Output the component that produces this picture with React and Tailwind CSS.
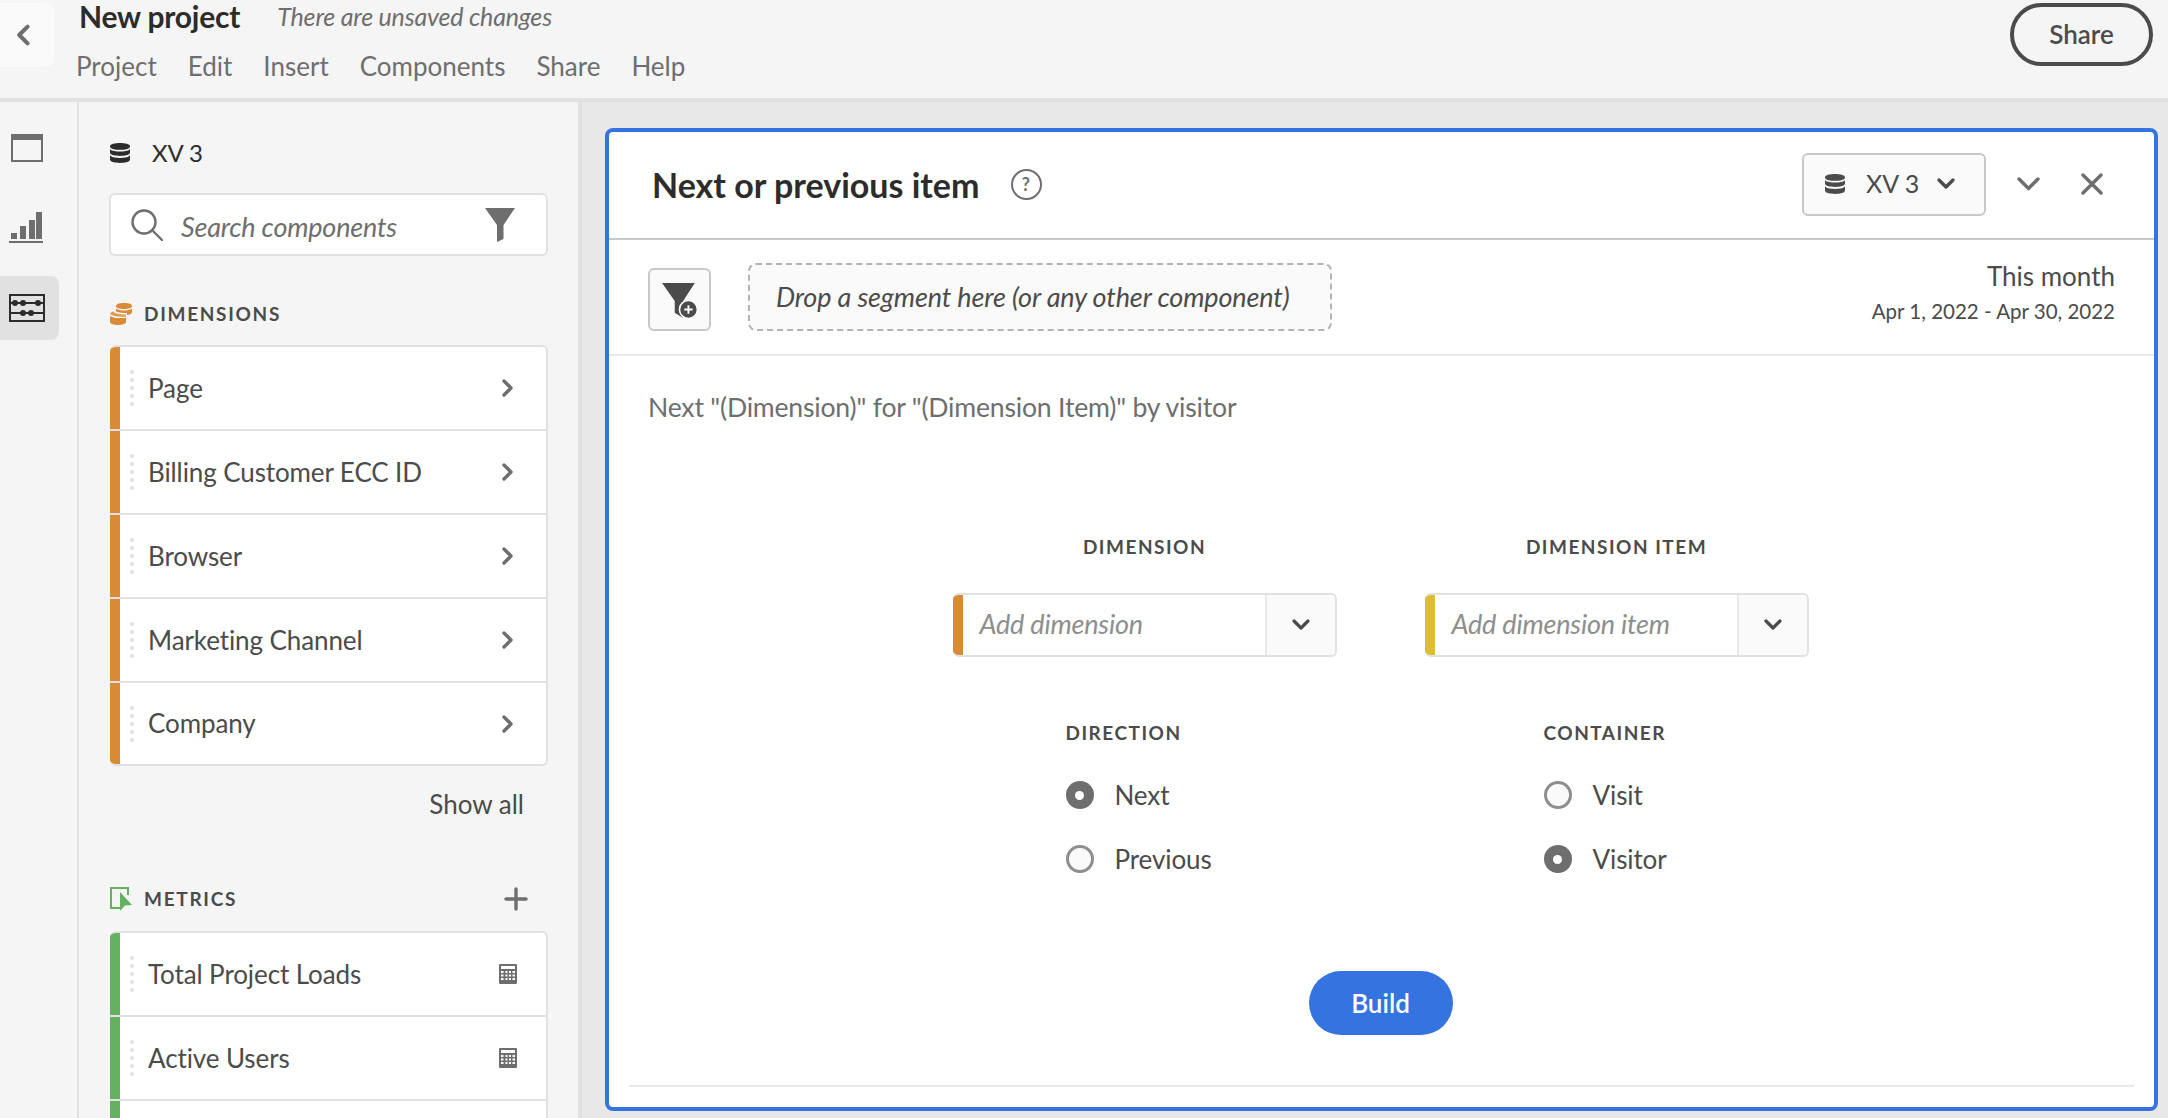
import React from 'react';

function DbIcon({ className }) {
  return (
    <svg viewBox="0 0 20 20" className={className} fill="currentColor">
      <path d="M10 0C5 0 0 1 0 3.4S5 6.8 10 6.8 20 5.800 20 3.400 15 0 10 0Z" />
      <path d="M0 6.200V9.600C0 12 5 13 10 13S20 12 20 9.600V6.200C18 8 14 8.600 10 8.600S2 8 0 6.200Z" />
      <path d="M0 12.600V16.600C0 19 5 20 10 20S20 19 20 16.600V12.600C18 14.400 14 15 10 15S2 14.400 0 12.600Z" />
    </svg>
  );
}

function Chevron({ className, dir = 'down', width = 3 }) {
  const d = { down: 'M3 6l7 7 7-7', right: 'M6 3l7 7-7 7', left: 'M13 3l-7 7 7 7' }[dir];
  return (
    <svg viewBox="0 0 20 20" className={className} fill="none" stroke="currentColor" strokeWidth={width} strokeLinecap="round" strokeLinejoin="round">
      <path d={d} />
    </svg>
  );
}

function DragHandle() {
  return (
    <div className="flex flex-col gap-1 shrink-0">
      {[0, 1, 2, 3, 4].map((i) => (
        <span key={i} className="block w-1 h-1 rounded-full bg-[#e1e1e1]" />
      ))}
    </div>
  );
}

function CalcIcon() {
  return (
    <svg viewBox="0 0 18 20" className="w-[18px] h-5 text-[#6e6e6e]">
      <path fill="currentColor" fillRule="evenodd" d="M1 0H17A1 1 0 0 1 18 1V19A1 1 0 0 1 17 20H1A1 1 0 0 1 0 19V1A1 1 0 0 1 1 0ZM2 2V5H16V2ZM2 7V9H4.500V7ZM6.500 7V9H8.500V7ZM10 7V9H12V7ZM13.500 7V9H16V7ZM2 10.500V12.500H4.500V10.500ZM6.500 10.500V12.500H8.500V10.500ZM10 10.500V12.500H12V10.500ZM13.500 10.500V12.500H16V10.500ZM2 14V16H4.500V14ZM6.500 14V16H8.500V14ZM10 14V16H12V14ZM13.500 14V16H16V14Z" />
    </svg>
  );
}

function ListRow({ label, stripe, right, last }) {
  return (
    <div className={`flex items-stretch ${last ? 'h-[81px]' : 'border-b-2 border-[#e1e1e1] h-[84px]'}`}>
      <div className={`w-[10px] shrink-0 ${stripe}`} />
      <div className="flex flex-1 items-center pl-[10px]">
        <DragHandle />
        <span className="ml-[14px] text-[26px] text-[#4b4b4b] tracking-[-0.1px]">{label}</span>
        <div className="ml-auto mr-[28px] flex items-center justify-center w-5">{right}</div>
      </div>
    </div>
  );
}

function Radio({ label, checked }) {
  return (
    <div className="flex items-center h-[28px]">
      {checked ? (
        <span className="flex items-center justify-center w-[28px] h-[28px] rounded-full bg-[#6e6e6e]">
          <span className="block w-[9px] h-[9px] rounded-full bg-white" />
        </span>
      ) : (
        <span className="block w-[28px] h-[28px] rounded-full border-[3px] border-[#8e8e8e] bg-[#fafafa]" />
      )}
      <span className="ml-[21px] text-[26px] text-[#4b4b4b] tracking-[-0.1px]">{label}</span>
    </div>
  );
}

function Picker({ label, placeholder, stripe }) {
  return (
    <div className="w-[384px]">
      <div className="text-center text-[19px] font-bold tracking-[1.5px] text-[#4b4b4b] leading-[24px]">{label}</div>
      <div className="mt-[34px] flex h-[64px] rounded-md border-2 border-l-0 border-[#e1e1e1] overflow-hidden">
        <div className={`w-[10px] shrink-0 ${stripe}`} />
        <div className="flex-1 flex items-center pl-[17px] pb-[2px] text-[27px] italic text-[#8e8e8e] tracking-[-0.2px]">{placeholder}</div>
        <div className="w-[70px] shrink-0 flex items-center justify-center border-l-2 border-[#e8e8e8] bg-[#fafafa] text-[#4b4b4b]">
          <Chevron className="w-5 h-5" width={3.2} />
        </div>
      </div>
    </div>
  );
}

function RadioGroup({ label, options, indent }) {
  return (
    <div className={`w-[384px] ${indent}`}>
      <div className="text-[19px] font-bold tracking-[1.5px] text-[#4b4b4b] leading-[24px]">{label}</div>
      <div className="mt-[36px] flex flex-col gap-[36px]">
        {options.map((o) => (
          <Radio key={o.label} label={o.label} checked={o.checked} />
        ))}
      </div>
    </div>
  );
}

const menu = ['Project', 'Edit', 'Insert', 'Components', 'Share', 'Help'];
const dimensions = ['Page', 'Billing Customer ECC ID', 'Browser', 'Marketing Channel', 'Company'];
const metrics = ['Total Project Loads', 'Active Users', ''];

export default function App() {
  return (
    <div className="flex flex-col w-screen h-screen overflow-hidden bg-[#f5f5f5] font-['Lato',sans-serif] text-[#4b4b4b]">
      {/* top bar */}
      <header className="flex shrink-0 h-[102px] border-b-4 border-[#e1e1e1]">
        <button className="mt-[3px] w-[54px] h-[64px] rounded-r-lg bg-[#fafafa] flex items-center justify-center text-[#6e6e6e]">
          <Chevron dir="left" className="w-6 h-6 -ml-[6px]" width={3.4} />
        </button>
        <div className="ml-[22px]">
          <div className="flex items-center h-[33px] ml-[3px]">
            <span className="text-[30px] leading-[33px] font-bold text-[#2c2c2c] tracking-[-0.2px]">New project</span>
            <span className="ml-[37px] text-[25px] leading-[33px] italic text-[#6e6e6e] tracking-[-0.2px]">There are unsaved changes</span>
          </div>
          <nav className="flex mt-[17px] gap-[31px] text-[26px] leading-[32px] text-[#6e6e6e]">
            {menu.map((m) => (
              <span key={m}>{m}</span>
            ))}
          </nav>
        </div>
        <button className="ml-auto mr-[15px] mt-[3px] w-[143px] h-[63px] rounded-full border-4 border-[#4b4b4b] text-[26px] font-semibold text-[#4b4b4b]">
          Share
        </button>
      </header>

      <div className="flex flex-1 min-h-0">
        {/* icon rail */}
        <aside className="w-[79px] shrink-0 border-r-2 border-[#e1e1e1] flex flex-col">
          <div className="mt-[32px] ml-[11px]">
            <svg viewBox="0 0 32 28" className="w-8 h-7 text-[#6e6e6e]" fill="none" stroke="currentColor">
              <rect x="1" y="1" width="30" height="26" strokeWidth="2" />
              <rect x="0" y="0" width="32" height="6" fill="currentColor" stroke="none" />
            </svg>
          </div>
          <div className="mt-[50px] ml-[9px]">
            <svg viewBox="0 0 34 32" className="w-[34px] h-8 text-[#6e6e6e]" fill="currentColor">
              <rect x="2" y="21" width="6" height="6" />
              <rect x="11" y="14" width="6" height="13" />
              <rect x="20" y="8" width="6" height="19" />
              <rect x="27" y="0" width="6" height="27" />
              <rect x="0" y="29" width="34" height="2" />
            </svg>
          </div>
          <div className="mt-[32px] w-[59px] h-[64px] rounded-r-lg bg-[#e1e1e1] flex items-center pl-[9px]">
            <svg viewBox="0 0 36 28" className="w-9 h-7 text-[#2c2c2c]" fill="none" stroke="currentColor" strokeWidth="2">
              <rect x="1" y="1" width="34" height="26" />
              <path d="M1 9H35M1 19H35" />
              <g fill="currentColor" stroke="none">
                <circle cx="6" cy="9" r="3" />
                <circle cx="14" cy="9" r="3" />
                <circle cx="29" cy="9" r="3" />
                <circle cx="14" cy="19" r="3" />
                <circle cx="22" cy="19" r="3" />
              </g>
            </svg>
          </div>
        </aside>

        {/* components sidebar */}
        <aside className="w-[503px] shrink-0 border-r-4 border-[#e1e1e1] pl-[31px] pr-[31px]">
          <div className="mt-[40px] flex items-center h-[22px]">
            <DbIcon className="w-5 h-5 text-[#2c2c2c]" />
            <span className="ml-[22px] text-[24px] text-[#2c2c2c]">XV 3</span>
          </div>
          <div className="mt-[29px] -ml-[1px] h-[63px] w-[439px] rounded-md border-2 border-[#e1e1e1] bg-white flex items-center pl-[20px] pr-[31px]">
            <svg viewBox="0 0 32 32" className="w-8 h-8 text-[#6e6e6e]" fill="none" stroke="currentColor" strokeWidth="2.400" strokeLinecap="round">
              <circle cx="13" cy="13" r="11.500" />
              <path d="M21.500 21.500L31 31" />
            </svg>
            <span className="ml-[18px] mt-[5px] text-[27px] italic text-[#6e6e6e] tracking-[-0.2px]">Search components</span>
            <svg viewBox="0 0 30 34" className="ml-auto w-[30px] h-[34px] text-[#6e6e6e]" fill="currentColor">
              <path d="M0 0H30L18.500 17V31L12 34V17Z" />
            </svg>
          </div>

          <div className="mt-[46px] flex items-center h-[24px]">
            <svg viewBox="0 0 22 22" className="w-[22px] h-[22px] text-[#d98a36]" fill="currentColor">
              <path d="M6 3C6 1 9 0 14 0S22 1 22 3 19 6 14 6 6 5 6 3Z" />
              <path d="M6 5.500C8 7 11 7.500 14 7.500S20 7 22 5.500V9C22 11 19 12 17 12V10C14 10 9 10 6 8.500Z" />
              <path d="M0 11C0 9.500 2 8.800 4 8.400V9.500C7 11 12 11.500 16 11.500V13.500C12 14 4 14 0 11Z" opacity="0.85" />
              <path d="M0 13C4 15.500 12 15.500 16 14.500V19C16 21 12 22 8 22S0 21 0 19Z" />
            </svg>
            <span className="ml-[12px] text-[19px] font-bold tracking-[1.7px] text-[#4b4b4b]">DIMENSIONS</span>
          </div>
          <div className="mt-[19px] w-[438px] rounded-md border-2 border-l-0 border-[#e1e1e1] bg-white overflow-hidden">
            {dimensions.map((d, i) => (
              <ListRow
                key={d}
                label={d}
                stripe="bg-[#d98a36]"
                last={i === dimensions.length - 1}
                right={<Chevron dir="right" className="w-5 h-5 text-[#6e6e6e]" width={3.4} />}
              />
            ))}
          </div>
          <div className="mt-[22px] mr-[23px] text-right text-[26px] leading-[32px] text-[#4b4b4b]">Show all</div>

          <div className="mt-[67px] flex items-center h-[24px]">
            <svg viewBox="0 0 22 24" className="w-[22px] h-6 text-[#64b25f]" fill="none" stroke="currentColor" strokeWidth="2">
              <path d="M10 21H1V1H18V8" />
              <path d="M10 5L22 18L15 18.500L10 24Z" fill="currentColor" stroke="none" />
            </svg>
            <span className="ml-[12px] text-[19px] font-bold tracking-[1.7px] text-[#4b4b4b]">METRICS</span>
            <svg viewBox="0 0 24 24" className="ml-[auto] mr-[19px] w-6 h-6 text-[#6e6e6e]" stroke="currentColor" strokeWidth="3.400" strokeLinecap="round">
              <path d="M12 2V22M2 12H22" />
            </svg>
          </div>
          <div className="mt-[20px] w-[438px] rounded-t-md border-2 border-l-0 border-b-0 border-[#e1e1e1] bg-white overflow-hidden">
            {metrics.map((m) => (
              <ListRow key={m} label={m} stripe="bg-[#64b25f]" right={m ? <CalcIcon /> : null} />
            ))}
          </div>
        </aside>

        {/* canvas */}
        <main className="flex-1 min-w-0 bg-[#e8e8e8] pt-[26px] pl-[23px] pr-[10px] pb-[7px]">
          <section className="h-full rounded-lg border-4 border-[#3573e0] bg-white flex flex-col">
            <div className="flex items-center shrink-0 h-[108px] border-b-2 border-[#c8c8c8] pl-[43px] pr-[51px] pb-[2px]">
              <h1 className="text-[34px] font-bold text-[#2c2c2c]">Next or previous item</h1>
              <span className="ml-[31px] flex items-center justify-center w-[31px] h-[31px] rounded-full border-2 border-[#6e6e6e] text-[18px] font-bold text-[#6e6e6e]">?</span>
              <button className="ml-auto w-[184px] h-[63px] rounded-md border-2 border-[#c8c8c8] bg-[#fafafa] flex items-center pl-[21px] text-[#4b4b4b]">
                <DbIcon className="w-5 h-5" />
                <span className="ml-[21px] text-[25px]">XV 3</span>
                <Chevron className="ml-[17px] w-5 h-5" width={3.4} />
              </button>
              <Chevron className="ml-[29px] w-[27px] h-[27px] text-[#6e6e6e]" width={2.6} />
              <svg viewBox="0 0 22 22" className="ml-[39px] w-[22px] h-[22px] text-[#6e6e6e]" stroke="currentColor" strokeWidth="3.400" strokeLinecap="round">
                <path d="M2 2L20 20M20 2L2 20" />
              </svg>
            </div>

            <div className="flex shrink-0 h-[116px] border-b-2 border-[#e8e8e8] pl-[39px] pr-[39px]">
              <button className="mt-[28px] w-[63px] h-[63px] rounded-md border-2 border-[#c8c8c8] bg-[#fafafa] flex items-center justify-center">
                <svg viewBox="0 0 36 36" className="w-[38px] h-[38px] text-[#4b4b4b]">
                  <path fill="currentColor" d="M1 2H32L21 19V35L13 30V19Z" />
                  <circle cx="26" cy="27" r="8.500" fill="currentColor" stroke="#fafafa" strokeWidth="1.500" />
                  <path d="M26 23V31M22 27H30" stroke="#fff" strokeWidth="1.800" />
                </svg>
              </button>
              <div className="ml-[37px] mt-[23px] w-[584px] h-[68px] rounded-lg border-2 border-dashed border-[#b3b3b3] bg-[#fafafa] flex items-center pl-[26px] text-[27px] italic text-[#4b4b4b] tracking-[-0.13px]">
                Drop a segment here (or any other component)
              </div>
              <div className="ml-auto mt-[18px] text-right">
                <div className="text-[26px] leading-[36px] text-[#4b4b4b]">This month</div>
                <div className="text-[20.5px] leading-[30px] text-[#4b4b4b] mt-[2px]">Apr 1, 2022 - Apr 30, 2022</div>
              </div>
            </div>

            <div className="pl-[39px] mt-[36px] text-[26.6px] leading-[30px] text-[#6e6e6e] tracking-[-0.2px]">
              Next "(Dimension)" for "(Dimension Item)" by visitor
            </div>

            <div className="mt-[113px] flex justify-center gap-[88px] pr-[2px]">
              <Picker label="DIMENSION" placeholder="Add dimension" stripe="bg-[#d98a36]" />
              <Picker label="DIMENSION ITEM" placeholder="Add dimension item" stripe="bg-[#dcbc3c]" />
            </div>

            <div className="mt-[64px] flex justify-center gap-[88px] pr-[2px]">
              <RadioGroup indent="pl-[113px]" label="DIRECTION" options={[{ label: 'Next', checked: true }, { label: 'Previous' }]} />
              <RadioGroup indent="pl-[119px]" label="CONTAINER" options={[{ label: 'Visit' }, { label: 'Visitor', checked: true }]} />
            </div>

            <div className="mt-[98px] flex justify-center pr-[2px]">
              <button className="w-[144px] h-[64px] rounded-full bg-[#3573e0] text-white text-[26px] font-semibold">Build</button>
            </div>

            <div className="mt-[50px] mx-[20px] border-t-2 border-[#e8e8e8]" />
          </section>
        </main>
      </div>
    </div>
  );
}
